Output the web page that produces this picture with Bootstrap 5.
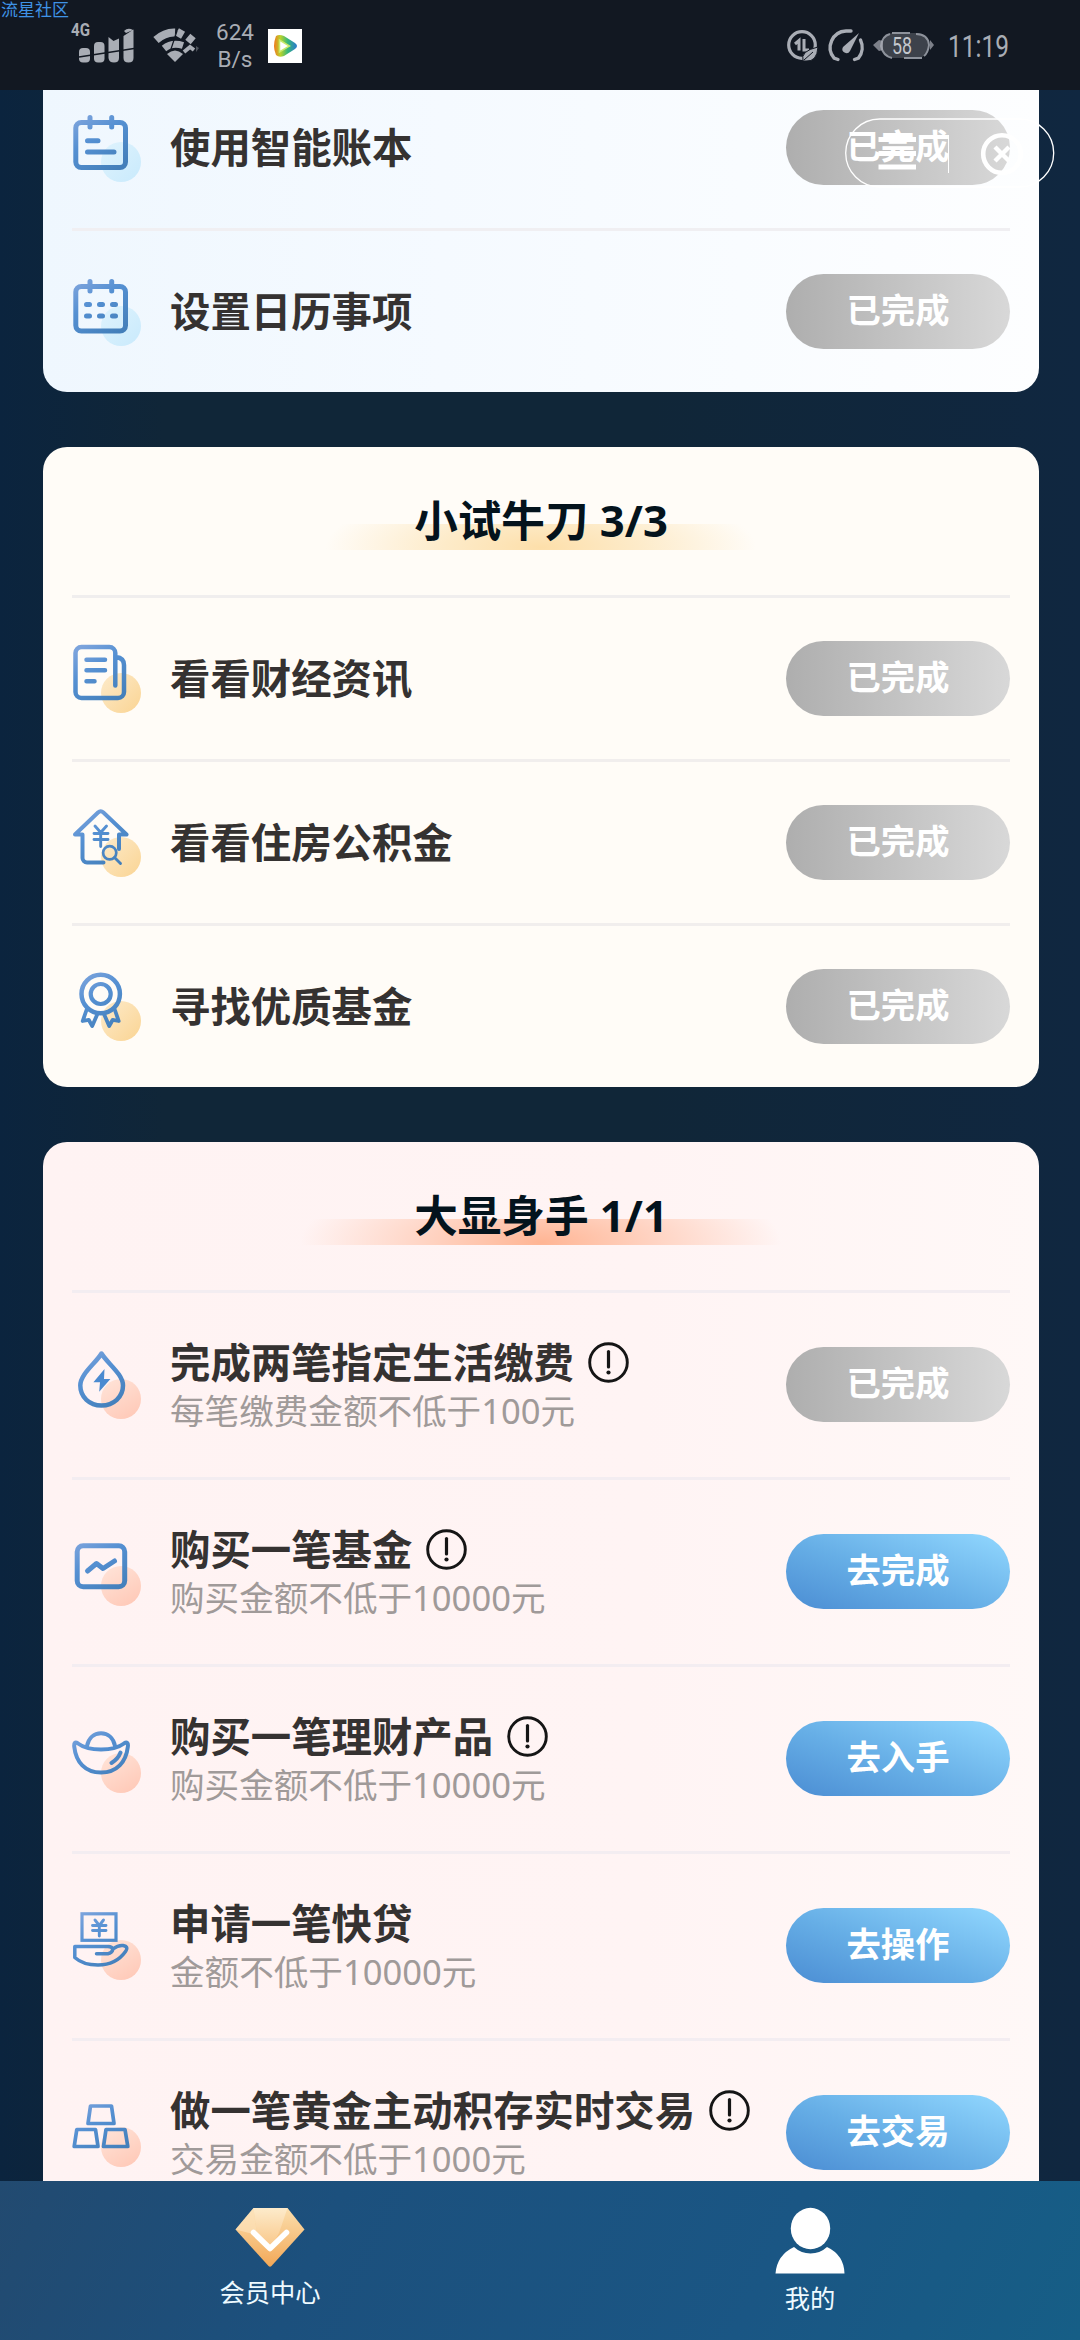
<!DOCTYPE html>
<html lang="zh-CN">
<head>
<meta charset="utf-8">
<meta name="viewport" content="width=device-width, initial-scale=1">
<title>会员中心</title>
<link href="https://cdn.jsdelivr.net/npm/bootstrap@5.3.0/dist/css/bootstrap.min.css" rel="stylesheet">
<style>
html,body{height:2340px;overflow:hidden}
body{width:1080px;background:linear-gradient(90deg,#0b243e,#102638 15%,#102638 60%,#102740);font-family:"Noto Sans","Noto Sans CJK SC",sans-serif}
.status-bar{height:90px;background:#121822;color:#a9adb5}
.watermark{left:1px;top:0;font:17px/17px "Noto Sans CJK SC",sans-serif;color:#3f93e6}
.task-area{padding:0 41px 0 43px;gap:55px}
.task-card{border:0;border-radius:24px;padding:0 29px}
.card-first{margin-top:-23px;background:linear-gradient(90deg,#eff7fe,#f5faff 40%,#fdfeff)}
.card-second{background:#fffcf7}
.card-third{background:linear-gradient(90deg,#fff3f3,#fff4f4 60%,#fff8f7)}
.task-head{height:151px;border-bottom:3px solid #f0eeee;padding-bottom:2px}
.task-head h2{font-size:43.6px;line-height:60px;font-weight:700;color:#04131c;margin:0;position:relative}
.glow{left:50%;top:34px;width:480px;height:26px;margin-left:-240px}
.glow-gold{background:radial-gradient(ellipse 215px 62px at 50% 90%,#fddfaa,#fdebc9 45%,rgba(255,252,247,0))}
.glow-coral{background:radial-gradient(ellipse 240px 76px at 50% 90%,#ffb594,#ffd5c5 50%,rgba(255,244,243,0))}
.task-row{height:164px;border-bottom:3px solid #f0eff2}
.task-row.last-row{height:161px;border-bottom:0}
.card-third .task-row{height:187px;padding-bottom:1px}
.card-third .task-row,.card-third .task-head{border-color:#f3edf1}
.card-second .task-row{border-color:#f1eeed}
.task-icon{width:70px;height:70px;flex:none;margin-right:28px;fill:none;stroke:url(#blueStroke);stroke-width:4.5;stroke-linecap:round;stroke-linejoin:round}
.task-name{font-size:40.4px;line-height:48px;font-weight:700;color:#353231;white-space:nowrap;padding-top:1px}
.task-text{padding-top:3px}
.task-note{font-size:34.6px;line-height:48px;color:#a09a99;white-space:nowrap}
.info-dot{width:41px;height:41px;margin-left:14px;flex:none}
.pill-btn{width:224px;height:75px;padding:0 0 4px;border:0;border-radius:38px;font-size:34.3px;line-height:71px;font-weight:700;color:#fff!important;flex:none}
.pill-done{background:linear-gradient(90deg,#aeaeae,#d8d8d8)}
.pill-go{background:linear-gradient(20deg,#4b8dd3,#66aee6 45%,#92d8ff)}
.capsule{left:845px;top:118px;z-index:5}
.tab-bar{height:159px;background:linear-gradient(115deg,#224a70,#1c507d 30%,#1a5684 70%,#165e86)}
.tab-link{color:#eefaff;font-size:25.3px;line-height:32px;padding-top:26px;text-decoration:none}
</style>
<script src="https://cdn.jsdelivr.net/npm/bootstrap@5.3.0/dist/js/bootstrap.bundle.min.js"></script>
</head>
<body class="d-flex flex-column position-relative">
<svg width="0" height="0" class="position-absolute" aria-hidden="true">
<defs>
<linearGradient id="blueStroke" gradientUnits="userSpaceOnUse" x1="8" y1="4" x2="42" y2="58"><stop offset="0" stop-color="#7ba3dc"/><stop offset=".4" stop-color="#5590d2"/><stop offset="1" stop-color="#437fba"/></linearGradient>
<linearGradient id="dotBlue" x1="0" y1="0" x2="1" y2="1"><stop offset="0" stop-color="#dff3fd"/><stop offset="1" stop-color="#c9eafc"/></linearGradient>
<linearGradient id="dotGold" x1="0" y1="0" x2="1" y2="1"><stop offset="0" stop-color="#fdebcb"/><stop offset="1" stop-color="#fad493"/></linearGradient>
<linearGradient id="dotCoral" x1="0" y1="0" x2=".6" y2="1"><stop offset="0" stop-color="#ffe5da"/><stop offset="1" stop-color="#ffcbba"/></linearGradient>
<linearGradient id="gem" x1="0" y1="0" x2="0" y2="1"><stop offset="0" stop-color="#fbdfae"/><stop offset="1" stop-color="#f3a857"/></linearGradient>
<linearGradient id="gemLight" x1="0" y1="0" x2="0" y2="1"><stop offset="0" stop-color="#fdebcb"/><stop offset="1" stop-color="#f9c585"/></linearGradient>
<linearGradient id="playRing" x1="0" y1="0" x2="1" y2="0"><stop offset="0" stop-color="#f07a20"/><stop offset=".28" stop-color="#b9d22c"/><stop offset=".6" stop-color="#35b77a"/><stop offset="1" stop-color="#2b79d0"/></linearGradient>
<symbol id="info" viewBox="0 0 41 41"><circle cx="20.5" cy="20.5" r="18.800" fill="none" stroke="#151515" stroke-width="2.900"/><path d="M20.500 9.500V25" stroke="#151515" stroke-width="3.200" stroke-linecap="round"/><circle cx="20.500" cy="30.500" r="2.100" fill="#151515"/></symbol>
</defs>
</svg>

<header class="status-bar flex-shrink-0 position-relative d-flex justify-content-between">
<span class="watermark position-absolute">流星社区</span>
<svg width="320" height="90" viewBox="0 0 320 90" fill="#a9adb5">
<text x="71" y="36" font-family="Roboto" font-weight="700" font-size="19" textLength="19" lengthAdjust="spacingAndGlyphs">4G</text>
<rect x="79" y="48" width="11" height="14.500" rx="4"/><rect x="94" y="42" width="10.500" height="20.500" rx="4"/>
<path d="M108.500 37l5 4 5.500-2.500V58q0 4.500-5 4.500t-5.500-4.500zM123.500 36l10-6.500V58q0 4.500-5 4.500t-5-4.500zM124 31q4-4 9-1l-7 3z"/>
<path d="M79 57l55-8.500" stroke="#121822" stroke-width="1.600"/>
<g fill="none" stroke="#a9adb5"><path d="M156 40q9-8 19-7.500" stroke-width="8"/><path d="M178 37l4-7M188 42l5-6" stroke-width="7"/><path d="M164 48.500q8-6.500 19-3" stroke-width="7"/><path d="M184 52l6-5 4 3" stroke-width="4"/></g>
<path d="M167 54q8-7 16 0l-8 8z"/><path d="M171 49l6-18" stroke="#121822" stroke-width="1.200"/><path d="M196 46l3 2-3 4z" opacity=".4"/>
<text x="235" y="40" font-family="Roboto" font-size="22.500" text-anchor="middle">624</text>
<text x="235" y="67" font-family="Roboto" font-size="22.500" text-anchor="middle">B/s</text>
<rect x="268" y="29" width="34" height="34" fill="#fff"/>
<path d="M276 36q3-2 8 0l11 7q4 3 0 6l-11 7q-5 2-8-1-4-9 0-19z" fill="url(#playRing)"/><path d="M279.500 40v12l10-6z" fill="#fff" stroke="#c8e96a" stroke-width="1.500"/>
</svg>
<svg width="310" height="90" viewBox="770 0 310 90" fill="#a9adb5">
<circle cx="802" cy="45" r="13.300" fill="none" stroke="#a9adb5" stroke-width="3.200"/>
<path d="M795 44l4-3.500v10M804 39v11h5" fill="none" stroke="#a9adb5" stroke-width="3"/>
<path d="M803 61q-3-10 15-14-1 15-12 14z" stroke="#121822"/><path d="M804 60l9-8" stroke="#121822"/>
<path d="M838 59.500l-4-1.500a16.500 16.500 0 0 1 12-27h5M860.500 40a17 17 0 0 1-2 18l-4 1.500" fill="none" stroke="#a9adb5" stroke-width="3.400" stroke-linecap="round"/><path d="M859 33l-9 18a3.800 3.800 0 1 1-7-4z"/>
<rect x="881" y="33" width="48" height="25" rx="12" fill="#3d424b"/>
<path d="M890 34q-8 2-9 12 2 10 11 12M892 33h18M904 58h18M916 34q12 0 13 11-1 8-5 11" fill="none" stroke="#8d929b" stroke-width="2"/>
<path d="M873 45l6-5 4 1v9l-4 1zM930 40l4 5-4 5z" opacity=".7"/>
<text x="892" y="54" font-family="Roboto" font-size="24" textLength="20" lengthAdjust="spacingAndGlyphs" fill="#c4c7cd">58</text>
<text x="948" y="57" font-family="Roboto" font-size="31.500" textLength="61" lengthAdjust="spacingAndGlyphs">11:19</text>
</svg>
</header>

<svg class="capsule position-absolute" width="210" height="70" viewBox="0 0 210 70" fill="none" stroke="#fff">
<rect x=".7" y="1" width="208" height="68" rx="34" stroke-width="1.300"/>
<path d="M33.500 21.500H71M33.500 35.500H71M33.500 49H71" stroke-width="5"/>
<path d="M103.500 17V55"/>
<circle cx="157" cy="36" r="18.800" stroke-width="4.600"/><path d="M150 29l14 14M164 29l-14 14" stroke-width="4.400"/>
</svg>

<main class="task-area flex-grow-1 d-flex flex-column overflow-hidden">
<section class="card task-card card-first rounded-top-0 flex-shrink-0">
<div class="task-row d-flex align-items-center">
<svg class="task-icon" viewBox="0 0 70 70"><circle cx="49" cy="49" r="20" fill="url(#dotBlue)" stroke="none"/><rect x="3.800" y="9.500" width="49.700" height="45" rx="5.500" stroke-width="5"/><path d="M18 4.500V14M39.700 4.500V14M15.500 27.700H26M15.500 39H42" stroke-width="5"/></svg>
<div class="task-name flex-grow-1">使用智能账本</div><button class="btn pill-btn pill-done">已完成</button>
</div>
<div class="task-row last-row d-flex align-items-center">
<svg class="task-icon" viewBox="0 0 70 70"><circle cx="49" cy="49" r="20" fill="url(#dotBlue)" stroke="none"/><rect x="3.800" y="9.500" width="49.700" height="44.500" rx="5.500" stroke-width="5"/><path d="M18 4.500V14M39.700 4.500V14M14.500 27.500h3M27.500 27.500h3M40.500 27.500h3M14.500 39h3M27.500 39h3M40.500 39h3" stroke-width="5"/></svg>
<div class="task-name flex-grow-1">设置日历事项</div><button class="btn pill-btn pill-done">已完成</button>
</div>
</section>

<section class="card task-card card-second flex-shrink-0">
<div class="task-head d-flex align-items-center justify-content-center"><h2><span class="glow glow-gold position-absolute"></span><span class="position-relative">小试牛刀 3/3</span></h2></div>
<div class="task-row d-flex align-items-center">
<svg class="task-icon" viewBox="0 0 70 70"><circle cx="49" cy="49" r="20" fill="url(#dotGold)" stroke="none"/><path d="M43.300 41.500V9a6 6 0 0 0-6-6H9.500a6 6 0 0 0-6 6V48a6 6 0 0 0 6 6H46a6 6 0 0 0 6-6V21q0-7-8-8M14.500 15.800H33M14.500 26.200H33M14.500 37.200h8"/></svg>
<div class="task-name flex-grow-1">看看财经资讯</div><button class="btn pill-btn pill-done">已完成</button>
</div>
<div class="task-row d-flex align-items-center">
<svg class="task-icon" viewBox="0 0 70 70"><circle cx="49" cy="49" r="20" fill="url(#dotGold)" stroke="none"/><path d="M31.500 54.500H15a4.500 4.500 0 0 1-4.500-4.500V26.500H3L26 4.500q2.700-2.500 5.400 0L54.500 26.500H47V41" stroke-width="4"/><path d="M23 18l5.700 6.500L34.500 18M22 25.500H36M22 31.500H36M28.700 25V38.500" stroke-width="2.900"/><circle cx="37.700" cy="44.800" r="6.600" stroke-width="2.700"/><path d="M42.500 49.500l6 6" stroke-width="2.900"/></svg>
<div class="task-name flex-grow-1">看看住房公积金</div><button class="btn pill-btn pill-done">已完成</button>
</div>
<div class="task-row last-row d-flex align-items-center">
<svg class="task-icon" viewBox="0 0 70 70"><circle cx="49" cy="49" r="20" fill="url(#dotGold)" stroke="none"/><circle cx="28.700" cy="22" r="19.200"/><circle cx="28.700" cy="22" r="10" stroke-width="4.200"/><path d="M14.500 38L10.700 49l6-1.200L20.200 54 25 43M42.900 38l3.800 11-6-1.200L37.200 54 32.400 43" stroke-width="3.800"/></svg>
<div class="task-name flex-grow-1">寻找优质基金</div><button class="btn pill-btn pill-done">已完成</button>
</div>
</section>

<section class="card task-card card-third flex-shrink-0">
<div class="task-head d-flex align-items-center justify-content-center"><h2><span class="glow glow-coral position-absolute"></span><span class="position-relative">大显身手 1/1</span></h2></div>
<div class="task-row d-flex align-items-center">
<svg class="task-icon" viewBox="0 0 70 70"><circle cx="49" cy="49" r="20" fill="url(#dotCoral)" stroke="none"/><path d="M29.500 3.500C24 13 8.300 24 8.300 35.500 8.300 47 17.500 55.500 29.500 55.500S51 47 51 35.500C51 24 35 13 29.500 3.500z"/><path d="M32.500 19L21.400 32.300H28l-.8 9.400L38.400 29H32z" fill="#4b8ad0" stroke="none"/></svg>
<div class="task-text flex-grow-1"><div class="task-name d-flex align-items-center">完成两笔指定生活缴费<svg class="info-dot"><use href="#info"/></svg></div><div class="task-note">每笔缴费金额不低于100元</div></div><button class="btn pill-btn pill-done">已完成</button>
</div>
<div class="task-row d-flex align-items-center">
<svg class="task-icon" viewBox="0 0 70 70"><circle cx="49" cy="49" r="20" fill="url(#dotCoral)" stroke="none"/><rect x="5.200" y="8.700" width="47.500" height="41" rx="6" stroke-width="5"/><path d="M15.500 34L24.500 26.500 31 31.500 42.500 24" stroke-width="5"/></svg>
<div class="task-text flex-grow-1"><div class="task-name d-flex align-items-center">购买一笔基金<svg class="info-dot"><use href="#info"/></svg></div><div class="task-note">购买金额不低于10000元</div></div><button class="btn pill-btn pill-go">去完成</button>
</div>
<div class="task-row d-flex align-items-center">
<svg class="task-icon" viewBox="0 0 70 70"><circle cx="49" cy="49" r="20" fill="url(#dotCoral)" stroke="none"/><path d="M6 19.500C12 24 20 25.500 29 25.500S46 24 52 19.500C55 17.500 56.500 19 55.800 23C54 38 45 48.500 29 48.500S4 38 2.300 23C1.800 19 3 17.500 6 19.500zM15 22C16.500 14 22 9.300 29 9.300S41.500 14 43 22M48.500 28.500q-2.500 6.500-9 10.500" stroke-width="4"/></svg>
<div class="task-text flex-grow-1"><div class="task-name d-flex align-items-center">购买一笔理财产品<svg class="info-dot"><use href="#info"/></svg></div><div class="task-note">购买金额不低于10000元</div></div><button class="btn pill-btn pill-go">去入手</button>
</div>
<div class="task-row d-flex align-items-center">
<svg class="task-icon" viewBox="0 0 70 70"><circle cx="49" cy="49" r="20" fill="url(#dotCoral)" stroke="none"/><rect x="10" y="2.800" width="34" height="26.500" stroke-width="3.200" stroke-linejoin="miter"/><path d="M23 9l4.300 5.500L31.500 9M20.500 14.500H34M20.500 19.500H34M27.300 14V25" stroke-width="2.900"/><path d="M2.800 35.500H36q4 .2 5 2.500 5-4 10-3.500 6 1 2.500 6Q44 54 26 54 11 54 2.800 46.500zM24.500 42.700H36q4-.5 5-4.500" stroke-width="3.500"/></svg>
<div class="task-text flex-grow-1"><div class="task-name">申请一笔快贷</div><div class="task-note">金额不低于10000元</div></div><button class="btn pill-btn pill-go">去操作</button>
</div>
<div class="task-row d-flex align-items-center">
<svg class="task-icon" viewBox="0 0 70 70"><circle cx="49" cy="49" r="20" fill="url(#dotCoral)" stroke="none"/><path d="M18.500 8H39.500L42 25.500H16zM4.800 31.500H23.500L26 48.500H2.200zM34 31.500H53L55.800 48.500H31.500z" stroke-width="3.700"/></svg>
<div class="task-text flex-grow-1"><div class="task-name d-flex align-items-center">做一笔黄金主动积存实时交易<svg class="info-dot"><use href="#info"/></svg></div><div class="task-note">交易金额不低于1000元</div></div><button class="btn pill-btn pill-go">去交易</button>
</div>
</section>
</main>

<nav class="tab-bar flex-shrink-0 d-flex">
<a href="#" class="tab-link w-50 d-flex flex-column align-items-center">
<svg width="70" height="69" viewBox="0 0 70 69"><path d="M18.500 1H52.500L69.500 22.500 36.500 59q-1.500 1.500-3 0L.5 22.500z" fill="url(#gem)"/><path d="M18.500 1H52.500L44 26 35 42 22 28z" fill="url(#gemLight)"/><path d="M18.500 1L22 28 .5 22.500z" fill="#fde6c3" opacity=".6"/><path d="M18.500 25.500L35 41.500 51.500 25.500" fill="none" stroke="#fff" stroke-width="5.600" stroke-linecap="round" stroke-linejoin="round"/></svg>
<span>会员中心</span></a>
<a href="#" class="tab-link w-50 d-flex flex-column align-items-center">
<svg width="70" height="75" viewBox="0 0 70 75" fill="#fff"><ellipse cx="35.500" cy="21.500" rx="19.700" ry="20.700"/><path d="M19 40Q26 46.500 35.500 46.500T52 40Q69 48 69.500 66.500H.5Q2 48 19 40z"/></svg>
<span>我的</span></a>
</nav>
</body>
</html>
